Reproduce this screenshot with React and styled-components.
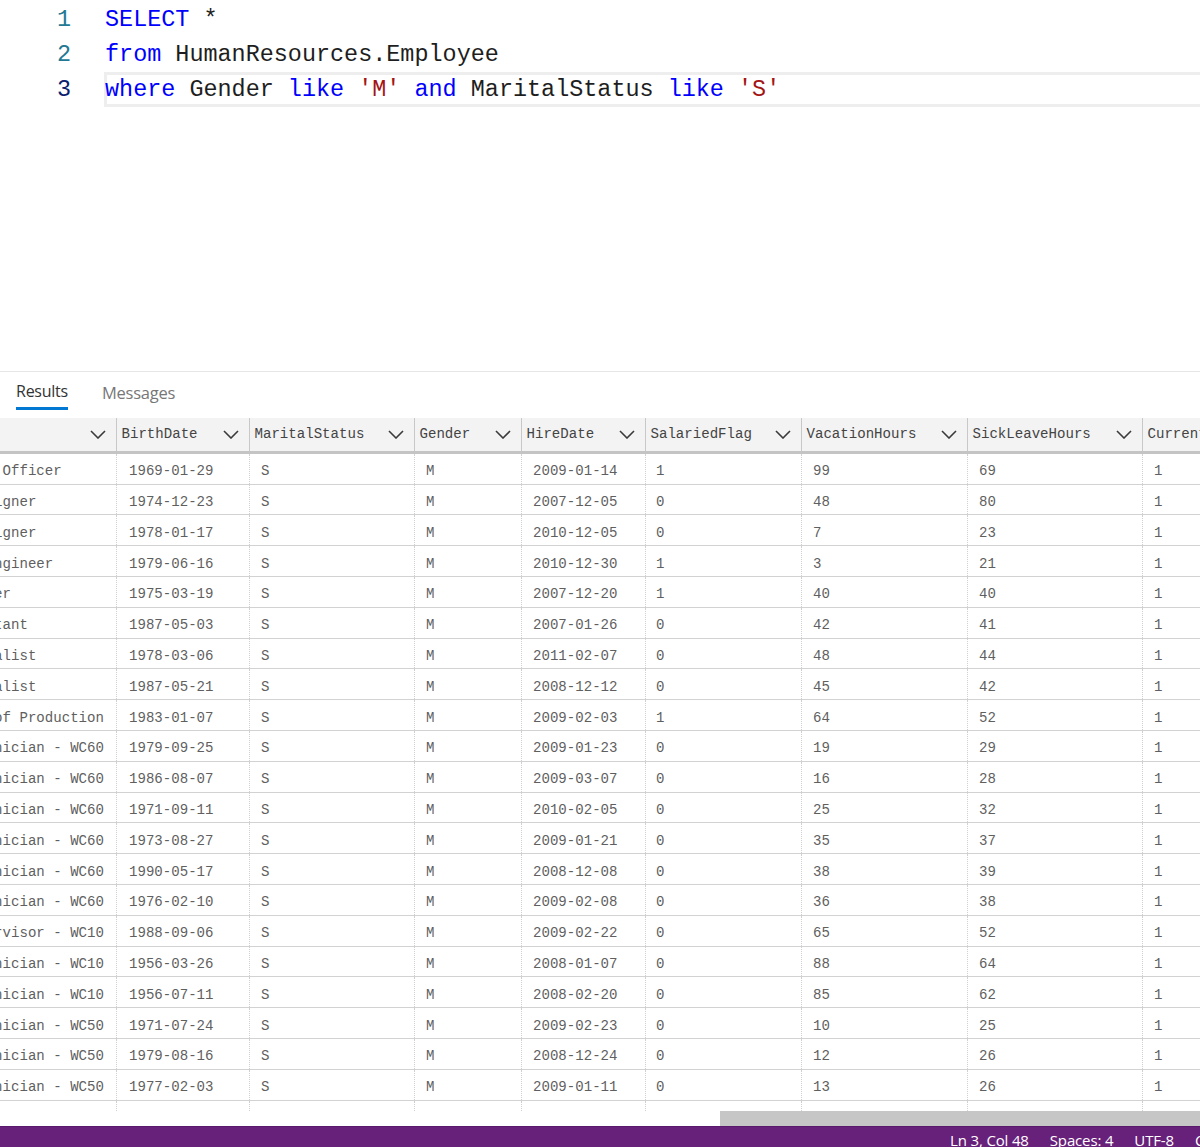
import React from 'react'
import styled, { createGlobalStyle } from 'styled-components'

const GlobalStyle = createGlobalStyle`
  html, body { margin: 0; padding: 0; background: #fff; }
  #root { height: 1147px; overflow: hidden; }
`

const columns = [
  { title: 'JobTitle', width: 250, pad: 0.4 },
  { title: 'BirthDate', width: 133, pad: 12 },
  { title: 'MaritalStatus', width: 165, pad: 11 },
  { title: 'Gender', width: 107, pad: 11 },
  { title: 'HireDate', width: 124, pad: 11 },
  { title: 'SalariedFlag', width: 156, pad: 10 },
  { title: 'VacationHours', width: 166, pad: 11 },
  { title: 'SickLeaveHours', width: 175, pad: 11 },
  { title: 'CurrentFlag', width: 160, pad: 11 },
]

const tech = 'Production Technician - '
const rows = [
  ['Chief Financial Officer', '1969-01-29', '2009-01-14', 1, 99, 69],
  ['Senior Tool Designer', '1974-12-23', '2007-12-05', 0, 48, 80],
  ['Senior Tool Designer', '1978-01-17', '2010-12-05', 0, 7, 23],
  ['Senior Design Engineer', '1979-06-16', '2010-12-30', 1, 3, 21],
  ['Marketing Manager', '1975-03-19', '2007-12-20', 1, 40, 40],
  ['Marketing Assistant', '1987-05-03', '2007-01-26', 0, 42, 41],
  ['Marketing Specialist', '1978-03-06', '2011-02-07', 0, 48, 44],
  ['Marketing Specialist', '1987-05-21', '2008-12-12', 0, 45, 42],
  ['Vice President of Production', '1983-01-07', '2009-02-03', 1, 64, 52],
  [tech + 'WC60', '1979-09-25', '2009-01-23', 0, 19, 29],
  [tech + 'WC60', '1986-08-07', '2009-03-07', 0, 16, 28],
  [tech + 'WC60', '1971-09-11', '2010-02-05', 0, 25, 32],
  [tech + 'WC60', '1973-08-27', '2009-01-21', 0, 35, 37],
  [tech + 'WC60', '1990-05-17', '2008-12-08', 0, 38, 39],
  [tech + 'WC60', '1976-02-10', '2009-02-08', 0, 36, 38],
  ['Production Supervisor - WC10', '1988-09-06', '2009-02-22', 0, 65, 52],
  [tech + 'WC10', '1956-03-26', '2008-01-07', 0, 88, 64],
  [tech + 'WC10', '1956-07-11', '2008-02-20', 0, 85, 62],
  [tech + 'WC50', '1971-07-24', '2009-02-23', 0, 10, 25],
  [tech + 'WC50', '1979-08-16', '2008-12-24', 0, 12, 26],
  [tech + 'WC50', '1977-02-03', '2009-01-11', 0, 13, 26],
]

const Page = styled.div`
  height: 1147px;
  display: flex;
  flex-direction: column;
  overflow: hidden;
  font-family: "Open Sans", "Noto Sans", sans-serif;
`

const Editor = styled.div`
  height: 371.5px;
  padding-top: 2px;
  box-sizing: border-box;
  border-bottom: 1px solid #e6e6e6;
  flex-shrink: 0;
`

const CodeLine = styled.div`
  display: flex;
  height: 34.9px;
  align-items: center;
  font-family: "Liberation Mono", "DejaVu Sans Mono", monospace;
  font-size: 23.45px;
  white-space: pre;
`

const LineNumber = styled.div`
  width: 71px;
  margin-right: 34px;
  text-align: right;
  color: ${p => (p.$active ? '#0b216f' : '#237893')};
  flex-shrink: 0;
`

const CodeText = styled.div`
  flex: 1;
  height: 100%;
  display: flex;
  align-items: center;
  box-sizing: border-box;
  color: #1e1e1e;
  ${p => p.$active && 'border: 3px solid #eeeeee; border-right: 0; margin-left: -1px;'}
`

const ActiveCode = styled.span`
  margin-left: -2px;
`

const Kw = styled.span`
  color: #0000ff;
`

const Str = styled.span`
  color: #a31515;
`

const Tabs = styled.div`
  height: 46px;
  display: flex;
  gap: 34px;
  padding-left: 16px;
  flex-shrink: 0;
`

const Tab = styled.div`
  height: 38px;
  padding-top: ${p => (p.$active ? 7 : 9)}px;
  box-sizing: border-box;
  font-size: ${p => (p.$active ? 16 : 16.5)}px;
  line-height: 24px;
  letter-spacing: -0.25px;
  color: ${p => (p.$active ? '#333333' : '#777777')};
  border-bottom: 3px solid ${p => (p.$active ? '#0078d4' : 'transparent')};
`

const Grid = styled.div`
  flex: 1;
  margin-left: -133px;
  width: 1500px;
  min-height: 0;
  font-family: "Liberation Mono", "DejaVu Sans Mono", monospace;
  font-size: 14.08px;
`

const HeaderRow = styled.div`
  display: flex;
  height: 36.3px;
  box-sizing: border-box;
  background: #f3f3f3;
  border-bottom: 3px solid #c4c4c4;
`

const HeaderCell = styled.div`
  width: ${p => p.$width}px;
  flex-shrink: 0;
  box-sizing: border-box;
  display: flex;
  align-items: center;
  justify-content: space-between;
  padding: 0 10px 0 4.5px;
  border-right: 1px solid #c8c8c8;
  color: #444444;
  white-space: nowrap;
`

const Row = styled.div`
  display: flex;
  height: 30.8px;
  box-sizing: border-box;
  border-bottom: 1px solid #d2d2d2;
`

const Cell = styled.div`
  width: ${p => p.$width}px;
  flex-shrink: 0;
  box-sizing: border-box;
  display: flex;
  align-items: center;
  padding: 5px 0 0 ${p => p.$pad}px;
  border-right: 1px dotted #d0d0d0;
  color: #5f5f5f;
  white-space: nowrap;
`

const Filler = styled.div`
  display: flex;
  height: 10px;
`

const FillerCell = styled.div`
  width: ${p => p.$width}px;
  flex-shrink: 0;
  box-sizing: border-box;
  border-right: 1px dotted #d0d0d0;
`

const ScrollTrack = styled.div`
  height: 15px;
  flex-shrink: 0;
  padding-left: 720px;
  box-sizing: border-box;
`

const ScrollThumb = styled.div`
  height: 100%;
  background: #c6c6c6;
`

const StatusBar = styled.div`
  height: 21px;
  flex-shrink: 0;
  box-sizing: border-box;
  background: #68217a;
  border-top: 1px solid #5a1a6b;
  color: #ffffff;
  display: flex;
  padding-left: 950px;
  gap: 21px;
  font-size: 15px;
  line-height: 27px;
  letter-spacing: -0.15px;
  white-space: nowrap;
  overflow: hidden;
`

const Chevron = () => (
  <svg width="16" height="9" viewBox="0 0 16 9" fill="none" stroke="#3a3a3a" strokeWidth="1.6">
    <path d="M1 1l7 7 7-7" />
  </svg>
)

function App() {
  const cellValues = r => [r[0], r[1], 'S', 'M', r[2], r[3], r[4], r[5], 1]

  return (
    <Page>
      <GlobalStyle />
      <Editor>
        <CodeLine>
          <LineNumber>1</LineNumber>
          <CodeText><span><Kw>SELECT</Kw> *</span></CodeText>
        </CodeLine>
        <CodeLine>
          <LineNumber>2</LineNumber>
          <CodeText><span><Kw>from</Kw> HumanResources.Employee</span></CodeText>
        </CodeLine>
        <CodeLine>
          <LineNumber $active>3</LineNumber>
          <CodeText $active>
            <ActiveCode>
              <Kw>where</Kw> Gender <Kw>like</Kw> <Str>'M'</Str> <Kw>and</Kw> MaritalStatus <Kw>like</Kw> <Str>'S'</Str>
            </ActiveCode>
          </CodeText>
        </CodeLine>
      </Editor>

      <Tabs>
        <Tab $active>Results</Tab>
        <Tab>Messages</Tab>
      </Tabs>

      <Grid>
        <HeaderRow>
          {columns.map(c => (
            <HeaderCell key={c.title} $width={c.width}>
              <span>{c.title}</span>
              <Chevron />
            </HeaderCell>
          ))}
        </HeaderRow>
        {rows.map((r, index) => (
          <Row key={index}>
            {cellValues(r).map((v, i) => (
              <Cell key={i} $width={columns[i].width} $pad={columns[i].pad}>{v}</Cell>
            ))}
          </Row>
        ))}
        <Filler>
          {columns.map(c => <FillerCell key={c.title} $width={c.width} />)}
        </Filler>
      </Grid>

      <ScrollTrack><ScrollThumb /></ScrollTrack>
      <StatusBar>
        <span>Ln 3, Col 48</span>
        <span>Spaces: 4</span>
        <span>UTF-8</span>
        <span>CRLF</span>
      </StatusBar>
    </Page>
  )
}

export default App
